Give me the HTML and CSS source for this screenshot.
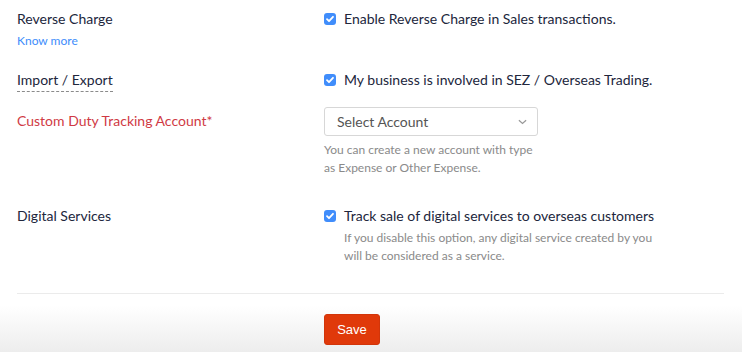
FILE: index.html
```html
<!DOCTYPE html>
<html lang="en">
<head>
    <meta charset="UTF-8">
    <meta name="viewport" content="width=device-width, initial-scale=1.0">
    <title>Tax Settings</title>
    <link rel="stylesheet" href="styles.css">
</head>
<body>
    <div class="settings">
        <div class="row row-reverse">
            <div class="label">
                <div>Reverse Charge</div>
                <a class="know-more" href="#">Know more</a>
            </div>
            <div class="field">
                <label class="check"><span class="box"><svg viewBox="0 0 12 12"><path d="M3 6.2l2 2 4-4.4"/></svg></span>Enable Reverse Charge in Sales transactions.</label>
            </div>
        </div>

        <div class="row row-import">
            <div class="label"><span class="dashed">Import / Export</span></div>
            <div class="field">
                <label class="check"><span class="box"><svg viewBox="0 0 12 12"><path d="M3 6.2l2 2 4-4.4"/></svg></span>My business is involved in SEZ / Overseas Trading.</label>
            </div>
        </div>

        <div class="row row-duty">
            <div class="label required">Custom Duty Tracking Account*</div>
            <div class="field">
                <div class="select">
                    <span>Select Account</span>
                    <svg class="caret" viewBox="0 0 10 6"><path d="M1 1l4 3.6L9 1"/></svg>
                </div>
                <p class="help">You can create a new account with type<br>as Expense or Other Expense.</p>
            </div>
        </div>

        <div class="row row-digital">
            <div class="label">Digital Services</div>
            <div class="field">
                <label class="check"><span class="box"><svg viewBox="0 0 12 12"><path d="M3 6.2l2 2 4-4.4"/></svg></span>Track sale of digital services to overseas customers</label>
                <p class="help help-indent">If you disable this option, any digital service created by you<br>will be considered as a service.</p>
            </div>
        </div>

        <hr class="divider">
    </div>

    <div class="footer">
        <button class="save">Save</button>
    </div>
</body>
</html>
```

FILE: styles.css
```css
body { margin: 0; background: #fff; color: #21263c; font-family: Lato, "Open Sans", sans-serif; font-size: 14px; }
.settings { padding: 0 18px 0 17px; }
.row { display: grid; grid-template-columns: 307px 1fr; line-height: 16px; }
.row-reverse { padding-top: 11px; }
.row-import { padding-top: 23px; }
.row-duty { padding-top: 18px; }
.row-digital { padding-top: 31px; }
.label { color: #21263c; }
.know-more { display: block; margin-top: 6px; color: #408dfb; font-size: 12px; text-decoration: none; }
.dashed { display: inline-block; padding-bottom: 3px; border-bottom: 1px dashed #8b8b8b; }
.required { color: #d03a44; padding-top: 3px; }
.check { display: flex; align-items: center; gap: 8px; }
.box { width: 12px; height: 12px; border-radius: 3px; background: #408dfb; display: flex; }
.box svg { width: 12px; height: 12px; fill: none; stroke: #fff; stroke-width: 1.8; stroke-linecap: round; stroke-linejoin: round; }
.select { width: 214px; height: 29px; box-sizing: border-box; border: 1px solid #d7d7d7; border-radius: 3px; display: flex; align-items: center; justify-content: space-between; padding: 0 10px 0 12px; color: #555; margin-top: -3px; }
.caret { width: 9px; height: 6px; fill: none; stroke: #999; stroke-width: 1.4; }
.help { margin: 5px 0 0; color: #8a8a8a; font-size: 12px; line-height: 18px; }
.help-indent { margin-top: 5px; padding-left: 20px; }
.divider { border: 0; border-top: 1px solid #ebebeb; margin: 28px 0 0; }
.footer { padding: 20px 0 7px 324px; background: linear-gradient(#fff, #fff 20%, #ededed); }
.save { background: #e0390a; border: 1px solid #d2350a; color: #fff; border-radius: 3px; font-family: "Liberation Sans Narrow", "Liberation Sans", sans-serif; font-size: 13px; width: 56px; height: 31px; padding: 0; cursor: pointer; }
```
